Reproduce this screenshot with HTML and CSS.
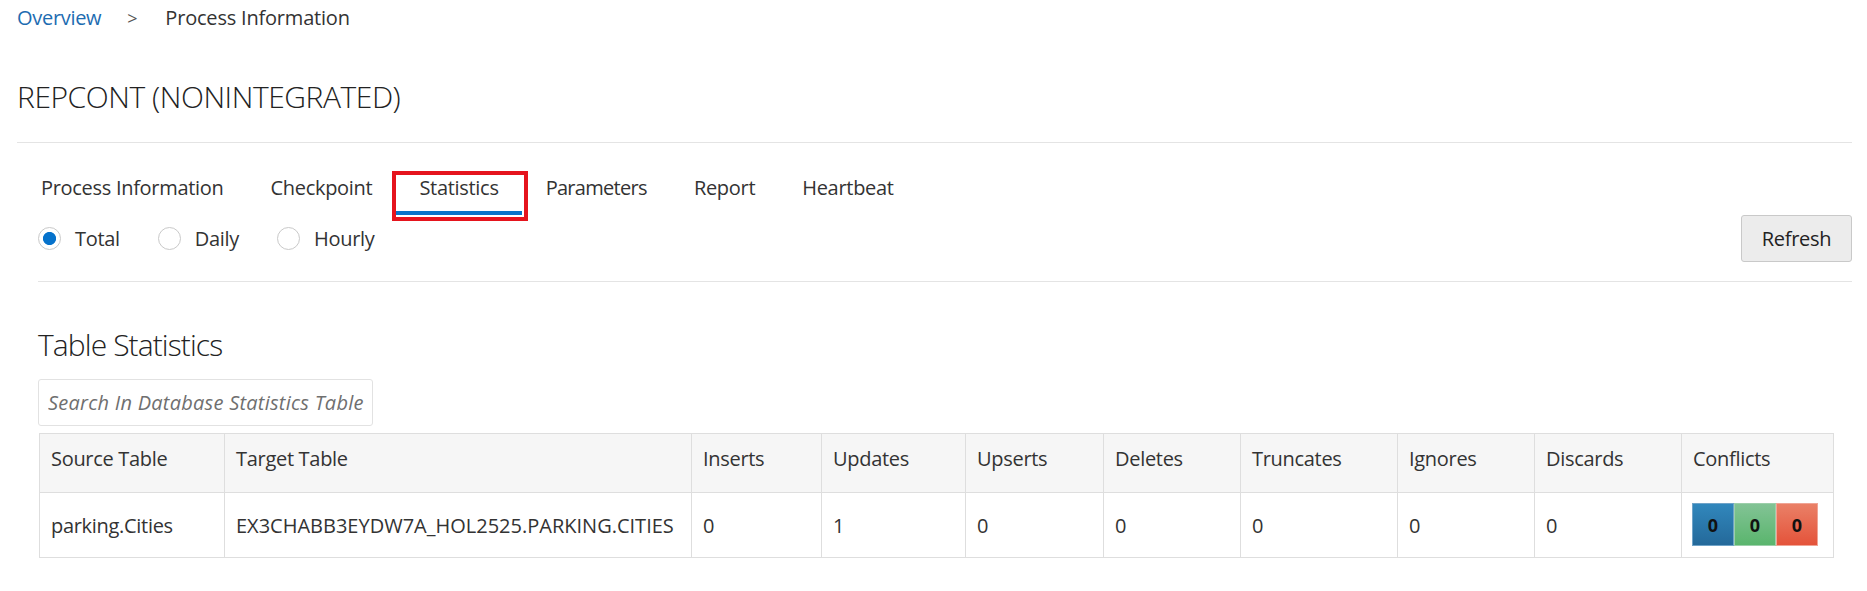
FILE: index.html
```html
<!DOCTYPE html>
<html lang="en">
<head>
<meta charset="utf-8">
<title>REPCONT (NONINTEGRATED)</title>
<link rel="stylesheet" href="styles.css">
</head>
<body>
<div class="page">
  <nav class="crumbs">
    <a class="crumb-link" href="#">Overview</a>
    <span class="crumb-sep">&gt;</span>
    <span class="crumb-current">Process Information</span>
  </nav>
  <h1 class="title">REPCONT (NONINTEGRATED)</h1>
  <div class="divider"></div>
  <div class="tabs">
    <div class="tab">Process Information</div>
    <div class="tab">Checkpoint</div>
    <div class="tab tab-active">Statistics<span class="annot"></span></div>
    <div class="tab tab-tight">Parameters</div>
    <div class="tab">Report</div>
    <div class="tab">Heartbeat</div>
  </div>
  <div class="panel">
    <div class="toolbar">
      <div class="radios">
        <label class="radio"><input type="radio" name="period" checked><span>Total</span></label>
        <label class="radio"><input type="radio" name="period"><span>Daily</span></label>
        <label class="radio"><input type="radio" name="period"><span>Hourly</span></label>
      </div>
      <button class="btn">Refresh</button>
    </div>
    <div class="divider"></div>
    <h2 class="section-title">Table Statistics</h2>
    <input class="search" type="text" placeholder="Search In Database Statistics Table">
    <table class="stats">
      <colgroup>
        <col class="w-src"><col class="w-tgt"><col class="w-ins"><col class="w-upd"><col class="w-ups">
        <col class="w-del"><col class="w-trn"><col class="w-ign"><col class="w-dis"><col class="w-con">
      </colgroup>
      <thead>
        <tr>
          <th>Source Table</th><th>Target Table</th><th>Inserts</th><th>Updates</th><th>Upserts</th>
          <th>Deletes</th><th>Truncates</th><th>Ignores</th><th>Discards</th><th>Conflicts</th>
        </tr>
      </thead>
      <tbody>
        <tr>
          <td>parking.Cities</td>
          <td class="upper">EX3CHABB3EYDW7A_HOL2525.PARKING.CITIES</td>
          <td>0</td><td>1</td><td>0</td><td>0</td><td>0</td><td>0</td><td>0</td>
          <td class="conflicts">
            <div class="badges"><span class="badge b-blue">0</span><span class="badge b-green">0</span><span class="badge b-red">0</span></div>
          </td>
        </tr>
      </tbody>
    </table>
  </div>
</div>
</body>
</html>
```
FILE: styles.css
```css
* { box-sizing: border-box; }
html, body { margin: 0; padding: 0; background: #fff; }
body {
  font-family: "Open Sans", "Noto Sans", sans-serif;
  font-size: 20px;
  letter-spacing: -0.3px;
  color: #333;
}
.page { padding: 0 15px 0 17px; }

.crumbs { height: 36px; line-height: 36px; display: flex; align-items: center; }
.crumb-link { color: #1d6cb1; text-decoration: none; }
.crumb-sep { color: #555; margin: 0 28px 0 26px; font-size: 18px; }
.crumb-current { color: #333; letter-spacing: -0.2px; }

.title {
  margin: 41px 0 25px;
  font-size: 30px;
  font-weight: 300;
  line-height: 40px;
  letter-spacing: -0.45px;
  color: #222;
}
.divider { height: 1px; background: #e4e4e4; }

.tabs { display: flex; margin-top: 21px; }
.tab {
  position: relative;
  padding: 10px 23px 9px 24px;
  line-height: 28px;
  border-bottom: 4px solid transparent;
  color: #333;
}
.tab-tight { letter-spacing: -0.7px; }
.tab-active { border-bottom-color: #0773c9; }
.annot {
  position: absolute;
  left: -3px; right: -6px; top: 7px; bottom: -10px;
  border: 4px solid #e5141d;
}

.panel { padding-left: 21px; }
.toolbar {
  height: 47px;
  display: flex;
  align-items: center;
  justify-content: space-between;
  margin-bottom: 19px;
}
.radios { display: flex; align-items: center; }
.radio { display: flex; align-items: center; margin-right: 38px; cursor: pointer; }
.radio span { margin-left: 14px; line-height: 28px; }
.radio input {
  -webkit-appearance: none;
  appearance: none;
  margin: 0;
  width: 23px; height: 23px;
  border-radius: 50%;
  border: 1.5px solid #c9c9c9;
  background: #fff;
}
.radio input:checked {
  background: radial-gradient(circle, #0672cb 0 6.2px, #fff 6.9px);
}
.btn {
  width: 111px; height: 47px;
  font-family: inherit; font-size: 20px; letter-spacing: -0.3px;
  color: #222;
  background: #ececec;
  border: 1px solid #c9c9c9;
  border-radius: 3px;
  padding: 0;
}

.section-title {
  margin: 43px 0 14px;
  font-size: 30px;
  font-weight: 300;
  line-height: 40px;
  letter-spacing: -0.9px;
  color: #222;
}
.search {
  display: block;
  width: 335px; height: 47px;
  border: 1px solid #e2e2e2;
  border-radius: 3px;
  padding: 0 0 0 9px;
  font-family: inherit; font-size: 20px; font-style: italic; letter-spacing: 0.25px;
  color: #333;
  background: #fff;
}
.search::placeholder { color: #6f6f6f; }

.stats {
  margin: 7px 0 0 1px;
  width: 1794px;
  table-layout: fixed;
  border-collapse: separate;
  border-spacing: 0;
  border-top: 1px solid #dedede;
  border-left: 1px solid #dedede;
}
.w-src { width: 185px; } .w-tgt { width: 467px; } .w-ins { width: 130px; } .w-upd { width: 144px; }
.w-ups { width: 138px; } .w-del { width: 137px; } .w-trn { width: 157px; } .w-ign { width: 137px; }
.w-dis { width: 147px; } .w-con { width: 152px; }
.stats th, .stats td {
  border-right: 1px solid #dedede;
  border-bottom: 1px solid #dedede;
  text-align: left;
  font-weight: 400;
  line-height: 28px;
  padding-left: 11px;
  white-space: nowrap;
  vertical-align: top;
}
.stats th { background: #f6f6f6; padding-top: 11px; padding-bottom: 19px; }
.stats td { padding-top: 19px; padding-bottom: 17px; }
.stats td.upper { letter-spacing: 0; }
.stats td.conflicts { padding-top: 10px; padding-bottom: 11px; padding-left: 10px; }
.badges { display: flex; height: 43px; }
.badge {
  width: 42px; height: 43px;
  display: flex; align-items: center; justify-content: center;
  font-weight: 700; font-size: 18px; color: #111; letter-spacing: 0;
  border: 1px solid;
}
.b-blue { background: linear-gradient(#3187bc, #24699a); border-color: #6fa3c8; }
.b-green { background: linear-gradient(#82c395, #5ab56d); border-color: #9ccfaa; }
.b-red { background: linear-gradient(#ea8067, #e4533a); border-color: #f0a495; }
```
